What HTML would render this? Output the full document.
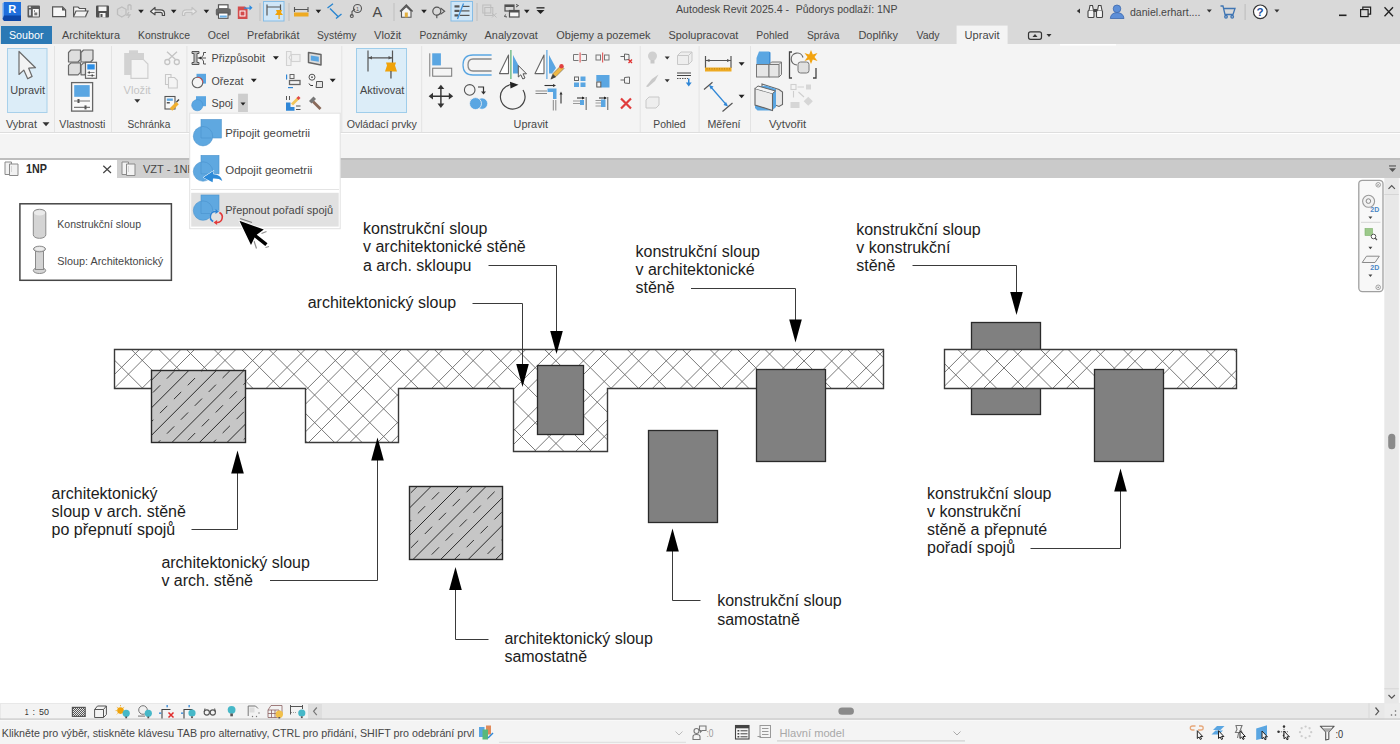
<!DOCTYPE html>
<html><head><meta charset="utf-8">
<style>
*{margin:0;padding:0;box-sizing:border-box}
html,body{width:1400px;height:744px;overflow:hidden;background:#fff;font-family:"Liberation Sans",sans-serif;color:#333}
.a{position:absolute}
.t{position:absolute;white-space:nowrap;font-size:11px;line-height:13px}
#title{left:0;top:0;width:1400px;height:23px;background:#d9d9d9}
#tabs{left:0;top:23px;width:1400px;height:21px;background:#d9d9d9}
#ribbon{left:0;top:44px;width:1400px;height:89px;background:#f4f4f4;border-bottom:1px solid #dedede}
#strip{left:0;top:134px;width:1400px;height:24px;background:#f4f4f4}
#vtabs{left:0;top:158px;width:1400px;height:20px;background:#cacaca;border-top:1px solid #bdbdbd}
#canvas{left:0;top:178px;width:1400px;height:525px;background:#fff}
#vbar{left:0;top:703px;width:1400px;height:17px;background:#e6e6e6}
#status{left:0;top:720px;width:1400px;height:24px;background:#f4f4f4;border-top:1px solid #d6d6d6}
.tab{top:28px;font-size:11.5px;color:#444}
.lbl{top:118px;font-size:11.5px;color:#444}
.sep{position:absolute;top:46px;width:1px;height:86px;background:#e2e2e2}
</style></head><body>
<div class="a" id="title"></div>
<div class="a" id="tabs"></div>
<div class="a" id="ribbon"></div>
<div class="a" id="strip"></div>
<div class="a" id="vtabs"></div>
<div class="a" id="canvas"></div>
<div class="a" id="vbar"></div>
<div class="a" id="status"></div>

<!-- DRAWING -->
<svg class="a" style="left:0;top:0" width="1400" height="744" viewBox="0 0 1400 744">
<defs>
<clipPath id="cw1"><polygon points="114.5,349.5 883.5,349.5 883.5,388.5 607.5,388.5 607.5,451.5 513.5,451.5 513.5,388.5 398.5,388.5 398.5,442.5 305.5,442.5 305.5,388.5 114.5,388.5"/></clipPath>
<clipPath id="cw2"><polygon points="944.5,349.5 1236.5,349.5 1236.5,388.5 944.5,388.5"/></clipPath>
<clipPath id="ca0"><rect x="151.5" y="370.5" width="94.0" height="72.0"/></clipPath>
<clipPath id="ca1"><rect x="409.5" y="486.5" width="93.0" height="73.0"/></clipPath>
</defs>
<polygon points="114.5,349.5 883.5,349.5 883.5,388.5 607.5,388.5 607.5,451.5 513.5,451.5 513.5,388.5 398.5,388.5 398.5,442.5 305.5,442.5 305.5,388.5 114.5,388.5" fill="#fff"/>
<path clip-path="url(#cw1)" d="M-10.9 345L99.1 455M16.7 345L126.7 455M44.2 345L154.2 455M71.8 345L181.8 455M99.3 345L209.3 455M126.9 345L236.9 455M154.4 345L264.4 455M182.0 345L292.0 455M209.6 345L319.6 455M237.1 345L347.1 455M264.6 345L374.6 455M292.2 345L402.2 455M319.8 345L429.8 455M347.3 345L457.3 455M374.9 345L484.9 455M402.4 345L512.4 455M429.9 345L540.0 455M457.5 345L567.5 455M485.1 345L595.0 455M512.6 345L622.6 455M540.1 345L650.1 455M567.7 345L677.7 455M595.2 345L705.2 455M622.8 345L732.8 455M650.4 345L760.4 455M677.9 345L787.9 455M705.5 345L815.5 455M733.0 345L843.0 455M760.5 345L870.5 455M788.1 345L898.1 455M815.6 345L925.6 455M843.2 345L953.2 455M870.8 345L980.8 455M898.3 345L1008.3 455M102.5 345L-7.5 455M143.9 345L33.9 455M185.3 345L75.3 455M226.7 345L116.7 455M268.1 345L158.1 455M309.5 345L199.5 455M350.9 345L240.9 455M392.3 345L282.3 455M433.7 345L323.7 455M475.1 345L365.1 455M516.5 345L406.5 455M557.9 345L447.9 455M599.3 345L489.3 455M640.7 345L530.7 455M682.1 345L572.1 455M723.5 345L613.5 455M764.9 345L654.9 455M806.3 345L696.3 455M847.7 345L737.7 455M889.1 345L779.1 455M930.5 345L820.5 455M971.9 345L861.9 455M1013.3 345L903.3 455M74.8 345L-35.2 455M116.2 345L6.2 455M157.6 345L47.6 455M199.0 345L89.0 455M240.4 345L130.4 455M281.8 345L171.8 455M323.2 345L213.2 455M364.6 345L254.6 455M406.0 345L296.0 455M447.4 345L337.4 455M488.8 345L378.8 455M530.2 345L420.2 455M571.6 345L461.6 455M613.0 345L503.0 455M654.4 345L544.4 455M695.8 345L585.8 455M737.2 345L627.2 455M778.6 345L668.6 455M820.0 345L710.0 455M861.4 345L751.4 455M902.8 345L792.8 455M944.2 345L834.2 455M985.6 345L875.6 455M1027.0 345L917.0 455" stroke="#6a6a6a" stroke-width="0.9" fill="none"/>
<polygon points="114.5,349.5 883.5,349.5 883.5,388.5 607.5,388.5 607.5,451.5 513.5,451.5 513.5,388.5 398.5,388.5 398.5,442.5 305.5,442.5 305.5,388.5 114.5,388.5" fill="none" stroke="#3a3a3a" stroke-width="1.4"/>
<rect x="971.5" y="322.5" width="69.0" height="92.0" fill="#808080" stroke="#2a2a2a" stroke-width="1.3"/>
<polygon points="944.5,349.5 1236.5,349.5 1236.5,388.5 944.5,388.5" fill="#fff"/>
<path clip-path="url(#cw2)" d="M870.8 345L917.8 392M898.3 345L945.3 392M925.9 345L972.9 392M953.4 345L1000.4 392M981.0 345L1028.0 392M1008.5 345L1055.5 392M1036.0 345L1083.0 392M1063.6 345L1110.6 392M1091.2 345L1138.2 392M1118.7 345L1165.7 392M1146.2 345L1193.2 392M1173.8 345L1220.8 392M1201.3 345L1248.3 392M1228.9 345L1275.9 392M1256.5 345L1303.5 392M930.5 345L883.5 392M971.9 345L924.9 392M1013.3 345L966.3 392M1054.7 345L1007.7 392M1096.1 345L1049.1 392M1137.5 345L1090.5 392M1178.9 345L1131.9 392M1220.3 345L1173.3 392M1261.7 345L1214.7 392M1303.1 345L1256.1 392M902.8 345L855.8 392M944.2 345L897.2 392M985.6 345L938.6 392M1027.0 345L980.0 392M1068.4 345L1021.4 392M1109.8 345L1062.8 392M1151.2 345L1104.2 392M1192.6 345L1145.6 392M1234.0 345L1187.0 392M1275.4 345L1228.4 392M1316.8 345L1269.8 392" stroke="#6a6a6a" stroke-width="0.9" fill="none"/>
<polygon points="944.5,349.5 1236.5,349.5 1236.5,388.5 944.5,388.5" fill="none" stroke="#3a3a3a" stroke-width="1.4"/>
<rect x="1094.5" y="369.5" width="69.0" height="92.0" fill="#808080" stroke="#2a2a2a" stroke-width="1.3"/>
<rect x="756.5" y="369.5" width="69.0" height="92.0" fill="#808080" stroke="#2a2a2a" stroke-width="1.3"/>
<rect x="537.5" y="365.5" width="46.0" height="69.0" fill="#808080" stroke="#2a2a2a" stroke-width="1.3"/>
<rect x="648.5" y="430.5" width="69.0" height="92.0" fill="#808080" stroke="#2a2a2a" stroke-width="1.3"/>
<rect x="151.5" y="370.5" width="94.0" height="72.0" fill="#c6c6c6"/>
<path clip-path="url(#ca0)" d="M108.1 368.5L32.1 444.5M135.7 368.5L59.7 444.5M163.2 368.5L87.2 444.5M190.8 368.5L114.8 444.5M218.3 368.5L142.3 444.5M245.9 368.5L169.9 444.5M273.4 368.5L197.4 444.5M301.0 368.5L225.0 444.5M328.5 368.5L252.5 444.5M356.1 368.5L280.1 444.5" stroke="#2a2a2a" stroke-width="1" fill="none"/>
<g clip-path="url(#ca0)" stroke="#333" stroke-width="1" stroke-dasharray="10.3 9.36" fill="none"><path d="M45.9 444.5L121.9 368.5" stroke-dashoffset="6.01"/><path d="M73.5 444.5L149.5 368.5" stroke-dashoffset="15.41"/><path d="M101.0 444.5L177.0 368.5" stroke-dashoffset="5.16"/><path d="M128.6 444.5L204.6 368.5" stroke-dashoffset="14.57"/><path d="M156.1 444.5L232.1 368.5" stroke-dashoffset="4.31"/><path d="M183.7 444.5L259.7 368.5" stroke-dashoffset="13.72"/><path d="M211.2 444.5L287.2 368.5" stroke-dashoffset="3.46"/><path d="M238.8 444.5L314.8 368.5" stroke-dashoffset="12.87"/><path d="M266.3 444.5L342.3 368.5" stroke-dashoffset="2.62"/><path d="M293.9 444.5L369.9 368.5" stroke-dashoffset="12.02"/></g>
<rect x="151.5" y="370.5" width="94.0" height="72.0" fill="none" stroke="#2a2a2a" stroke-width="1.4"/>
<rect x="409.5" y="486.5" width="93.0" height="73.0" fill="#c6c6c6"/>
<path clip-path="url(#ca1)" d="M377.8 484.5L300.8 561.5M405.4 484.5L328.4 561.5M433.0 484.5L356.0 561.5M460.5 484.5L383.5 561.5M488.0 484.5L411.0 561.5M515.6 484.5L438.6 561.5M543.2 484.5L466.2 561.5M570.7 484.5L493.7 561.5M598.2 484.5L521.2 561.5M625.8 484.5L548.8 561.5" stroke="#2a2a2a" stroke-width="1" fill="none"/>
<g clip-path="url(#ca1)" stroke="#333" stroke-width="1" stroke-dasharray="10.3 9.36" fill="none"><path d="M314.6 561.5L391.6 484.5" stroke-dashoffset="11.53"/><path d="M342.2 561.5L419.2 484.5" stroke-dashoffset="1.27"/><path d="M369.8 561.5L446.8 484.5" stroke-dashoffset="10.68"/><path d="M397.3 561.5L474.3 484.5" stroke-dashoffset="0.42"/><path d="M424.8 561.5L501.8 484.5" stroke-dashoffset="9.83"/><path d="M452.4 561.5L529.4 484.5" stroke-dashoffset="19.23"/><path d="M480.0 561.5L557.0 484.5" stroke-dashoffset="8.98"/><path d="M507.5 561.5L584.5 484.5" stroke-dashoffset="18.38"/><path d="M535.0 561.5L612.0 484.5" stroke-dashoffset="8.13"/><path d="M562.6 561.5L639.6 484.5" stroke-dashoffset="17.54"/></g>
<rect x="409.5" y="486.5" width="93.0" height="73.0" fill="none" stroke="#2a2a2a" stroke-width="1.4"/>
<path d="M488.5 265.5H556.5V340" stroke="#3a3a3a" stroke-width="1" fill="none"/>
<polygon points="550.2,331 562.8,331 556.5,354" fill="#000" stroke="#fff" stroke-width="0"/>
<path d="M472.5 303.5H522.5V370" stroke="#3a3a3a" stroke-width="1" fill="none"/>
<polygon points="516.2,364 528.8,364 522.5,387" fill="#000" stroke="#fff" stroke-width="0"/>
<path d="M691 288.5H795.5V325" stroke="#3a3a3a" stroke-width="1" fill="none"/>
<polygon points="789.2,319.5 801.8,319.5 795.5,342.5" fill="#000" stroke="#fff" stroke-width="0"/>
<path d="M912.5 265.5H1016.5V300" stroke="#3a3a3a" stroke-width="1" fill="none"/>
<polygon points="1010.2,292 1022.8,292 1016.5,315" fill="#000" stroke="#fff" stroke-width="0"/>
<path d="M191.5 529.5H237.5V465" stroke="#3a3a3a" stroke-width="1" fill="none"/>
<polygon points="231.2,473.5 243.8,473.5 237.5,450.5" fill="#000"/>
<path d="M270 580.5H377.5V455" stroke="#3a3a3a" stroke-width="1" fill="none"/>
<polygon points="371.2,460.5 383.8,460.5 377.5,437.5" fill="#000"/>
<path d="M488.5 639.5H455.5V580" stroke="#3a3a3a" stroke-width="1" fill="none"/>
<polygon points="449.2,590 461.8,590 455.5,567" fill="#000"/>
<path d="M700.5 600.5H672.5V540" stroke="#3a3a3a" stroke-width="1" fill="none"/>
<polygon points="666.2,551.5 678.8,551.5 672.5,528.5" fill="#000"/>
<path d="M1030.5 548.5H1120.5V480" stroke="#3a3a3a" stroke-width="1" fill="none"/>
<polygon points="1114.2,491.5 1126.8,491.5 1120.5,468.5" fill="#000"/>
<g font-family="Liberation Sans" font-size="16" fill="#1c1c1c">
<text x="363" y="234.2">konstrukční sloup</text>
<text x="363" y="252.4">v architektonické stěně</text>
<text x="363" y="270.6">a arch. skloupu</text>
<text x="307.7" y="307.8">architektonický sloup</text>
<text x="635.5" y="256.7">konstrukční sloup</text>
<text x="635.5" y="274.9">v architektonické</text>
<text x="635.5" y="293.1">stěně</text>
<text x="856.2" y="235.0">konstrukční sloup</text>
<text x="856.2" y="253.2">v konstrukční</text>
<text x="856.2" y="271.4">stěně</text>
<text x="51.6" y="498.6">architektonický</text>
<text x="51.6" y="516.8">sloup v arch. stěně</text>
<text x="51.6" y="535.0">po přepnutí spojů</text>
<text x="161.4" y="568.0">architektonický sloup</text>
<text x="161.4" y="586.2">v arch. stěně</text>
<text x="504.4" y="644.0">architektonický sloup</text>
<text x="504.4" y="662.2">samostatně</text>
<text x="717.2" y="606.4">konstrukční sloup</text>
<text x="717.2" y="624.6">samostatně</text>
<text x="927" y="498.8">konstrukční sloup</text>
<text x="927" y="517.0">v konstrukční</text>
<text x="927" y="535.1">stěně a přepnuté</text>
<text x="927" y="553.4">pořadí spojů</text>
</g>
</svg>

<svg class="a" style="left:0;top:0" width="1400" height="744" viewBox="0 0 1400 744">
<rect x="4" y="2" width="17" height="15" fill="#1f6fdc"/>
<polygon points="2.5,3.5 4,2 4,17 2.5,19" fill="#6aa6ef"/>
<rect x="4" y="15.5" width="17" height="5.5" fill="#0c47a8"/>
<polygon points="2.5,19 4,15.5 4,21" fill="#0c47a8"/>
<text x="8.2" y="13.2" font-family="Liberation Sans" font-weight="bold" font-size="11" fill="#fff">R</text>
<rect x="27.5" y="5.5" width="12.5" height="12" rx="1" fill="#5a5a5a"/><rect x="32.8" y="9" width="6" height="7.5" fill="#f8f8f8"/><rect x="29" y="9.5" width="2" height="6" fill="#cfd3da"/><rect x="28.8" y="6.5" width="2" height="1.5" fill="#e6e6e6"/><rect x="34.3" y="12.5" width="3" height="2.8" fill="#777"/><rect x="34" y="10.3" width="0.9" height="1.5" fill="#555"/>
<path d="M52.6 6.8H62.5L65.6 9.9V16.6H52.6Z" fill="#f7f7f7" stroke="#555" stroke-width="1.2"/><path d="M62 6.8V10.4H65.6" fill="#555"/>
<path d="M73.6 7H78L79.5 8.5H85.5V16.6H73.6Z" fill="#f7f7f7" stroke="#555" stroke-width="1.2"/><path d="M73.6 16.6L76 11H88L85.5 16.6" fill="#f2f2f2" stroke="#555" stroke-width="1.2"/>
<rect x="96" y="5.5" width="13" height="12" rx="1" fill="#505050"/><rect x="98.5" y="6.5" width="8" height="4.5" fill="#f4f4f4"/><rect x="99.5" y="13" width="6" height="4.5" fill="#f4f4f4"/><rect x="100.5" y="14" width="2" height="3" fill="#505050"/>
<g fill="none" stroke="#bdbdbd" stroke-width="1.3"><path d="M117.5 9.3L121.8 7L126 9.3V14.5L121.8 17L117.5 14.5Z"/><path d="M128 10.5V5.5Q129.5 4 131 5.5V10"/><path d="M129 12L127 15H130L128 18"/></g><path d="M119.5 10.5H124M121.8 10.5V15" stroke="#d6d6d6" stroke-width="1"/>
<polygon points="138.2,9.85 143.8,9.85 141,13.15" fill="#222"/>
<path d="M150.5 11.5L155 7.5V9.8H160.5Q164.5 9.8 164.5 13.3V15.5H162.3V13.8Q162.3 12.3 160.5 12.3H155V14.8Z" fill="#f2f2f2" stroke="#4a4a4a" stroke-width="1.2" stroke-linejoin="round"/>
<polygon points="170.89999999999998,9.85 176.5,9.85 173.7,13.15" fill="#222"/>
<path d="M196.5 11.5L192 7.5V9.8H186.5Q182.5 9.8 182.5 13.3V15.5H184.7V13.8Q184.7 12.3 186.5 12.3H192V14.8Z" fill="#e8e8e8" stroke="#c2c2c2" stroke-width="1.2" stroke-linejoin="round"/>
<polygon points="203.6,9.85 209.20000000000002,9.85 206.4,13.15" fill="#222"/>
<rect x="218.5" y="4.8" width="9.5" height="4" fill="#fff" stroke="#555" stroke-width="1.2"/><rect x="215.8" y="8.5" width="15" height="7" rx="1.5" fill="#666"/><rect x="218.5" y="13" width="9.5" height="5.3" fill="#fff" stroke="#555" stroke-width="1.1"/><rect x="219.8" y="15.5" width="7" height="2" fill="#6ab0e8"/>
<path d="M237.8 6.5H245L247.5 9V19H237.8Z" fill="#d34b4b"/><rect x="240" y="11" width="5" height="5" fill="none" stroke="#fff" stroke-width="1"/><path d="M244 7.5H249.5V5L252.5 7.8L249.5 10.6V8.8H244Z" fill="#2a8ae0"/>
<rect x="259.5" y="3" width="1" height="18" fill="#c0c0c0"/>
<rect x="263.5" y="1.5" width="20.5" height="19.5" fill="#cfe6f7" stroke="#86bde6" stroke-width="1"/>
<g stroke="#555" stroke-width="1.2" fill="none"><path d="M267 4.5V15.5M280.5 4.5V11M267 7H280.5"/></g><path d="M276 10H282L281 12.5L283 15H275L277 12.5Z" fill="#f0a30a"/><rect x="278.5" y="15" width="1.2" height="4" fill="#f0a30a"/>
<rect x="288.5" y="3" width="1" height="18" fill="#c0c0c0"/>
<g stroke="#555" stroke-width="1.1" fill="none"><path d="M294.5 7V12M308 7V12M294.5 9.5H308"/></g><rect x="294" y="12.5" width="14.5" height="4" fill="#eeaa22"/>
<polygon points="315.59999999999997,9.85 321.2,9.85 318.4,13.15" fill="#222"/>
<g stroke="#2b86d0" stroke-width="1.4" fill="none"><path d="M330 8.5L338.5 17"/><path d="M327.5 8L333 3.8M336 18.5L341.5 14"/></g>
<g stroke="#555" stroke-width="1.1" fill="none"><path d="M352 16V11.5L355 9"/><circle cx="357.5" cy="8.5" r="4"/><circle cx="351.8" cy="16" r="1.5"/></g><text x="356" y="10.5" font-size="5.5" font-family="Liberation Sans" fill="#555">1</text>
<text x="372.5" y="17.3" font-size="14.5" font-family="Liberation Sans" fill="#4a4a4a">A</text>
<rect x="393.5" y="3" width="1" height="18" fill="#c0c0c0"/>
<path d="M400 11.5L406.3 5L412.6 11.5" fill="none" stroke="#555" stroke-width="1.4"/><path d="M401.5 11V17.3H411V11L406.3 6.5Z" fill="#f4f4f4" stroke="#555" stroke-width="1.1"/><rect x="404.8" y="12.5" width="3" height="4.8" fill="#e3b040"/>
<polygon points="421.2,9.85 426.8,9.85 424,13.15" fill="#222"/>
<circle cx="436.8" cy="11.2" r="4" fill="none" stroke="#555" stroke-width="1.2"/><path d="M440.5 8L444.6 11.2L440.5 14.4" fill="none" stroke="#555" stroke-width="1.2"/><rect x="436.2" y="15" width="1.2" height="3.2" fill="#555"/>
<rect x="451" y="1.5" width="21.5" height="19.5" fill="#cfe6f7" stroke="#86bde6" stroke-width="1"/>
<g fill="#555"><rect x="454.5" y="5.3" width="5" height="2.2"/><rect x="454.5" y="9.8" width="5" height="2.2"/><rect x="454.5" y="14.3" width="4" height="2.2"/><rect x="462" y="5.8" width="7.5" height="1.2"/><rect x="461" y="10.3" width="8.5" height="1.2"/><rect x="460" y="14.8" width="9.5" height="1.2"/></g><path d="M463.5 3.5L457.5 19" stroke="#3e8fd6" stroke-width="1.3"/>
<rect x="476.5" y="3" width="1" height="18" fill="#c0c0c0"/>
<g fill="none" stroke="#bdbdbd" stroke-width="1"><rect x="482.8" y="5" width="8" height="8"/><rect x="484.8" y="7.5" width="8" height="8"/><path d="M492 13L496.5 17.5M496.5 13L492 17.5"/></g>
<g fill="none" stroke="#505050" stroke-width="1.2"><rect x="505" y="5" width="9" height="6"/><rect x="509.5" y="10.5" width="9.5" height="6.5" fill="#f8f8f8"/></g><rect x="505" y="5" width="9" height="2" fill="#505050"/><rect x="509.5" y="10.5" width="9.5" height="2" fill="#505050"/><path d="M516 4.5L518.5 5.5L516 7M505.5 14.5L504.5 16.5L507 17" stroke="#505050" stroke-width="1" fill="none"/>
<polygon points="524.0,9.85 529.5999999999999,9.85 526.8,13.15" fill="#222"/>
<rect x="536.5" y="7.2" width="8" height="1.3" fill="#222"/><polygon points="536.5,10 544.5,10 540.5,14" fill="#222"/>
<polygon points="1080,8.5 1080,13.5 1076.8,11" fill="#333"/>
<g fill="#f4f4f4" stroke="#444" stroke-width="1.1"><rect x="1088" y="10.5" width="6" height="7" rx="1"/><rect x="1096.5" y="10.5" width="6" height="7" rx="1"/><path d="M1089 10.5L1090 5.5H1092.5L1093.5 10.5M1097.5 10.5L1098.5 5.5H1101L1102 10.5"/></g><rect x="1093.5" y="9" width="3.5" height="3" fill="#444"/>
<circle cx="1117" cy="8.8" r="3.8" fill="#5d8fd8" stroke="#3c68ad" stroke-width="0.8"/><path d="M1110.3 18.5Q1110.8 12.8 1117 12.6Q1123.4 12.8 1124 18.5Z" fill="#5d8fd8" stroke="#3c68ad" stroke-width="0.8"/>
<polygon points="1206.8,9.5 1211.8,9.5 1209.3,12.5" fill="#333"/>
<g fill="none" stroke="#3f75b3" stroke-width="1.3"><path d="M1220.5 6H1223L1225 14.5H1233L1235 8.5H1224"/><circle cx="1226" cy="16.8" r="1.3"/><circle cx="1232.2" cy="16.8" r="1.3"/></g>
<rect x="1244.6" y="4" width="1" height="16" fill="#bbb"/>
<circle cx="1260.3" cy="11.8" r="6.8" fill="#fff" stroke="#333" stroke-width="1.2"/><text x="1256.6" y="16.3" font-size="11.5" font-weight="bold" font-family="Liberation Sans" fill="#2250a0">?</text>
<polygon points="1274.4,9.5 1279.4,9.5 1276.9,12.5" fill="#333"/>
<rect x="1339" y="14.5" width="7.5" height="1.6" fill="#222"/>
<g fill="none" stroke="#222" stroke-width="1.2"><rect x="1360.6" y="9.6" width="7.5" height="7"/><path d="M1362.8 9.6V7.2H1370.6V14.2H1368.1"/></g>
<path d="M1384.5 7.2L1393 16.2M1393 7.2L1384.5 16.2" stroke="#222" stroke-width="1.3"/>
<rect x="1028.5" y="31.8" width="13" height="7.5" rx="2" fill="none" stroke="#333" stroke-width="1.2"/><polygon points="1032.5,37 1037.5,37 1035,34" fill="#333"/>
<polygon points="1046.5,34.0 1051.5,34.0 1049,37.0" fill="#333"/><rect x="54" y="46" width="1" height="86" fill="#e3e3e3"/>
<rect x="111" y="46" width="1" height="86" fill="#e3e3e3"/>
<rect x="186.4" y="46" width="1" height="86" fill="#e3e3e3"/>
<rect x="341.3" y="46" width="1" height="86" fill="#e3e3e3"/>
<rect x="421.2" y="46" width="1" height="86" fill="#e3e3e3"/>
<rect x="639.7" y="46" width="1" height="86" fill="#e3e3e3"/>
<rect x="698.6" y="46" width="1" height="86" fill="#e3e3e3"/>
<rect x="750" y="46" width="1" height="86" fill="#e3e3e3"/>
<rect x="7.5" y="48.5" width="39.5" height="64" fill="#dcedf8" stroke="#a8d0ea" stroke-width="1"/>
<path d="M19 51.5V74.5L23.8 70.1L27.7 78.8L32.1 76.4L28.7 68.2L35.5 67.7Z" fill="#f3f3f3" stroke="#6a6a6a" stroke-width="1.2" stroke-linejoin="round"/>
<polygon points="42.5,122.3 49.5,122.3 46,126.3" fill="#333"/>
<g fill="#dedede" stroke="#6a6a6a" stroke-width="1.2" stroke-linejoin="round"><path d="M71.0 50H80.5V59.5L78.0 62H68.5V52.5Z"/><path d="M83.5 50H93V59.5L90.5 62H81V52.5Z"/><path d="M71.0 62.8H80.5V72.3L78.0 74.8H68.5V65.3Z"/><path d="M83.5 62.8H87V72.3L84.5 74.8H81V65.3Z"/></g>
<rect x="85.5" y="62.3" width="11" height="16" fill="#f7f7f7" stroke="#666" stroke-width="1.2"/><rect x="87.3" y="64.3" width="7.4" height="5.2" fill="#2c8ee6"/><path d="M87.5 72.5H94.5M87.5 75.5H94.5" stroke="#777" stroke-width="0.9"/><rect x="88.5" y="71.5" width="1.5" height="2" fill="#444"/><rect x="91.5" y="74.5" width="1.5" height="2" fill="#444"/>
<rect x="71.6" y="82.6" width="21" height="28.5" fill="#f9f9f9" stroke="#666" stroke-width="1.3"/><rect x="74.2" y="85.1" width="15.5" height="11.7" fill="#5aa6e2"/>
<path d="M74 101H90M74 107.4H90" stroke="#777" stroke-width="1.1"/><rect x="77.5" y="99" width="2" height="4" fill="#555"/><rect x="84.5" y="105.4" width="2" height="4" fill="#555"/>
<rect x="124.2" y="53" width="19.8" height="22" fill="#d2d2d2"/><rect x="129" y="50.3" width="9" height="3" fill="#d2d2d2"/>
<path d="M131 59.5H143.5L147.9 64V78.3H131Z" fill="#f4f4f4" stroke="#cfcfcf" stroke-width="1.2"/>
<polygon points="134.3,99.25 140.3,99.25 137.3,102.75" fill="#333"/>
<g fill="none" stroke="#c4c4c4" stroke-width="1.3"><circle cx="167.3" cy="62" r="2.5"/><circle cx="176.8" cy="62" r="2.5"/><path d="M168.5 59.5L177 51.7M175.5 59.5L167 51.7"/></g>
<g fill="#f4f4f4" stroke="#c8c8c8" stroke-width="1.1"><path d="M165.5 74.5H171V84.5H165.5Z"/><path d="M168.5 77.5H174.5L177.3 80.3V88H168.5Z"/></g>
<rect x="165" y="96.5" width="10" height="12.5" fill="#f8f8f8" stroke="#555" stroke-width="1.1"/><rect x="166.8" y="98.5" width="6" height="2.3" fill="#5aa6e2"/><rect x="166.8" y="102" width="3" height="1.5" fill="#555"/><path d="M171 109.5L177.5 103" stroke="#f0b030" stroke-width="3.5"/><path d="M176.5 102L179 99.5" stroke="#444" stroke-width="1.5"/>
<path d="M192 51.5H199V53.5H197V62.5H199V64.5H192V62.5H194V53.5H192Z" fill="#bdbdbd" stroke="#555" stroke-width="1"/>
<g fill="none" stroke="#555" stroke-width="1"><path d="M197.5 58H206M201 58L203.5 55V52.5H206M201 58L203.5 61V64H206"/></g><polygon points="198.5,58 201,56.5 201,59.5" fill="#333"/>
<rect x="196.5" y="73.8" width="9.5" height="9.8" fill="#5aa6e2"/><circle cx="197.5" cy="82.5" r="5.3" fill="#f4f4f4" stroke="#666" stroke-width="1.1"/><path d="M197.5 77.2A5.3 5.3 0 0 1 202.8 82.5" fill="none" stroke="#e05050" stroke-width="1"/>
<rect x="196" y="96.2" width="10" height="10" fill="#5aa6e2"/><circle cx="197.3" cy="105.2" r="5.6" fill="#5aa6e2" stroke="#4a94d0" stroke-width="0.6"/>
<polygon points="272.9,56.25 278.9,56.25 275.9,59.75" fill="#222"/>
<polygon points="250.8,78.85 256.8,78.85 253.8,82.35" fill="#222"/>
<rect x="238.1" y="93.7" width="9.8" height="18.3" fill="#cdcdcd"/>
<polygon points="240.5,102.5 245.5,102.5 243,105.5" fill="#222"/>
<g fill="#f0f0f0" stroke="#d2d2d2" stroke-width="1.1"><path d="M286.5 51.5H291V54.5L289 57.5L291 60.5V65.5H286.5Z"/><rect x="291.5" y="54.5" width="8.5" height="7"/></g>
<path d="M308.5 52.5L321 54.5V65L308.5 62.5Z" fill="#dcdcdc" stroke="#666" stroke-width="1.5" stroke-linejoin="round"/><path d="M310.8 55.5L318.8 56.8V61.8L310.8 60.5Z" fill="#5aa6e2"/>
<rect x="286" y="74.5" width="1.2" height="5" fill="#2f86d6"/><rect x="290" y="74.5" width="4" height="4" fill="none" stroke="#666" stroke-width="1"/><rect x="289.5" y="80.5" width="10.5" height="4" fill="none" stroke="#666" stroke-width="1.3"/><rect x="288" y="87" width="5" height="1.2" fill="#2f86d6"/>
<circle cx="312" cy="77.2" r="3" fill="none" stroke="#555" stroke-width="1"/><circle cx="312" cy="77.2" r="0.9" fill="#555"/><path d="M316.5 81.5H322.5V87.5H316L316.5 84Z" fill="#e6e6e6" stroke="#555" stroke-width="1"/><path d="M309 83.5L310.5 85.5H313" stroke="#333" stroke-width="1" fill="none"/>
<polygon points="329.7,78.85 335.7,78.85 332.7,82.35" fill="#222"/>
<rect x="286" y="96" width="1" height="4" fill="#555"/><rect x="289" y="96" width="1" height="4" fill="#555"/><path d="M286 102.5H290.5V107H294.5V110.7H286Z" fill="#2f86d6"/><path d="M296 106H300.5M296 109.5H300.5" stroke="#555" stroke-width="1"/><path d="M292 104.5L298.5 98" stroke="#f2c55a" stroke-width="2.8"/><path d="M297.5 99L299.5 97" stroke="#e04848" stroke-width="2.8"/>
<path d="M313 101.5L320.5 109" stroke="#8a6a5a" stroke-width="2.8"/><path d="M309 101L313.5 96.5L316 99L311.5 103.5Z" fill="#777"/><rect x="356.5" y="48.5" width="50" height="64" fill="#dcedf8" stroke="#9fcdea" stroke-width="1"/>
<g stroke="#555" stroke-width="1.2" fill="none"><path d="M368 50.5V71.5M392.5 50.5V63M368 57.8H392.5"/></g><polygon points="368.5,57.8 372,56 372,59.6" fill="#555"/><polygon points="392,57.8 388.5,56 388.5,59.6" fill="#555"/>
<path d="M386 62.5H396L395 65.5L397 71.5H385L387 65.5Z" fill="#f0a30a"/><rect x="390.3" y="71" width="1.3" height="7.5" fill="#555"/>
<rect x="429.2" y="53.3" width="1.1" height="23.3" fill="#888"/><rect x="432.2" y="53.3" width="8.7" height="12.1" fill="#5aa6e2"/><rect x="432.7" y="68.2" width="19" height="8" fill="#f5f5f5" stroke="#777" stroke-width="1"/>
<path d="M491.6 55H473Q463 55 463 65Q463 75 473 75H491.6" fill="none" stroke="#5aa6e2" stroke-width="1.3"/><path d="M491.6 59H473Q468 59 468 65Q468 71 473 71H491.6" fill="none" stroke="#888" stroke-width="1.3"/>
<g fill="#333"><polygon points="440.9,84.8 437.5,89 444.3,89"/><polygon points="440.9,108 437.5,103.5 444.3,103.5"/><polygon points="428.6,96.2 433,92.8 433,99.6"/><polygon points="453.2,96.2 448.8,92.8 448.8,99.6"/></g><path d="M440.9 88V104.5M432 96.2H450" stroke="#333" stroke-width="1.4"/>
<circle cx="469.7" cy="89.9" r="5.3" fill="none" stroke="#555" stroke-width="1.1"/><path d="M478 87H483.5V92" fill="none" stroke="#333" stroke-width="1.2"/><polygon points="481,91.5 486,91.5 483.5,94.5" fill="#333"/>
<circle cx="482" cy="103.6" r="5.6" fill="#5aa6e2" stroke="#fff" stroke-width="0.5"/><circle cx="475.5" cy="103.6" r="6" fill="#5aa6e2" stroke="#f4f4f4" stroke-width="0.8"/>
<path d="M499.5 73.6L508.5 55V73.6Z" fill="#fff" stroke="#666" stroke-width="1.1" stroke-linejoin="round"/><rect x="510.3" y="50" width="1.2" height="29" fill="#56b070"/><path d="M513 55L520.5 69V73.6H513Z" fill="#5aa6e2"/>
<path d="M518.3 65.5V77L520.8 74.8L522.8 79L525 78L523 73.8H526.5Z" fill="#f4f4f4" stroke="#555" stroke-width="1" stroke-linejoin="round"/>
<path d="M535 73.6L544 55V73.6Z" fill="#fff" stroke="#666" stroke-width="1.1" stroke-linejoin="round"/><rect x="546.3" y="50" width="1.2" height="29" fill="#5aa6e2"/><path d="M549 55L556 68L552 73.6H549Z" fill="#5aa6e2"/>
<path d="M551 79L553 73.5L561 65.5L564 68.5L556 76.5Z" fill="#f0b845" stroke="#555" stroke-width="0.5"/><circle cx="561.5" cy="66.3" r="2.2" fill="#e04040"/><polygon points="550.5,79.5 553,74 556,77" fill="#444"/>
<path d="M512 84.5A12.3 12.3 0 1 0 523 90" fill="none" stroke="#444" stroke-width="1.2"/><polygon points="510,81.7 518.5,84.8 510.5,88.5" fill="#222"/>
<path d="M535.5 91H547M535.5 93.5H547" stroke="#888" stroke-width="1"/><path d="M547.5 88.5H556.5V99H553V92H547.5Z" fill="#5aa6e2"/><path d="M553.3 100V110.5M555.8 100V110.5" stroke="#888" stroke-width="1"/>
<path d="M544.5 85.5H555" stroke="#333" stroke-width="1.1"/><polygon points="556,85.5 553,84 553,87" fill="#333"/><path d="M561 103.5V93" stroke="#333" stroke-width="1.1"/><polygon points="561,91.5 559.5,94.5 562.5,94.5" fill="#333"/>
<g fill="none" stroke="#777" stroke-width="1"><path d="M578.5 54.5H573.5V60.5H578.5M581.5 54.5H586.5V60.5H581.5"/><rect x="596" y="55" width="4.5" height="5"/><rect x="604.5" y="55" width="4.5" height="5"/></g><rect x="579.5" y="52.5" width="1.2" height="10" fill="#e06060"/><rect x="602" y="52.5" width="1.2" height="10" fill="#e06060"/>
<g fill="none" stroke="#666" stroke-width="1"><path d="M620.5 56.5H624M624.5 54L629 54.5V59.5L624.5 60Z"/></g><path d="M628.5 59.5L632 63M632 59.5L628.5 63" stroke="#e03030" stroke-width="1.3"/>
<g fill="#5aa6e2"><rect x="580.5" y="76.5" width="5" height="4.5"/><rect x="574" y="82.5" width="5" height="4.5"/><rect x="580.5" y="82.5" width="5" height="4.5"/></g><rect x="574.5" y="77" width="4" height="3.5" fill="none" stroke="#666" stroke-width="1"/>
<path d="M596.3 75H609.5V87.5H601V81.5H596.3Z" fill="#5aa6e2"/><rect x="596.8" y="82" width="4" height="5" fill="#f4f4f4" stroke="#555" stroke-width="1"/>
<g fill="none" stroke="#666" stroke-width="1"><path d="M620.5 80H624M624.5 77.5L629.5 77V83.5L624.5 83Z"/></g>
<path d="M573 101H580M573 103.5H580" stroke="#999" stroke-width="1.1"/><rect x="580" y="100" width="4" height="5" fill="#5aa6e2"/><rect x="585.5" y="97" width="1.4" height="13" fill="#888"/><path d="M577 98H584" stroke="#222" stroke-width="1"/><polygon points="585,98 582,96.5 582,99.5" fill="#222"/>
<path d="M595.5 100.5H601M595.5 103H601M595.5 106H601" stroke="#999" stroke-width="1.1"/><rect x="601" y="99.5" width="4.5" height="7.5" fill="#5aa6e2"/><rect x="607" y="97" width="1.4" height="13" fill="#888"/><path d="M599 98H606" stroke="#222" stroke-width="1"/><polygon points="607,98 604,96.5 604,99.5" fill="#222"/>
<path d="M621 98.5L631 108.5M631 98.5L621 108.5" stroke="#e03c3c" stroke-width="2.2"/>
<circle cx="652.5" cy="56" r="4.5" fill="#d0d0d0"/><rect x="650.5" y="60" width="4" height="3.5" fill="#c8c8c8"/>
<polygon points="664.7,56.4 669.7,56.4 667.2,59.4" fill="#333"/>
<g fill="#eee" stroke="#c8c8c8" stroke-width="1"><path d="M677.5 55.5L681 52H692V61L688.5 64.5H677.5Z"/><path d="M677.5 55.5H688.5V64.5M688.5 55.5L692 52"/></g>
<path d="M646 86.5L652 79L658.5 74.5L655 81L648 87Z" fill="#c9c9c9"/>
<polygon points="664.7,79.2 669.7,79.2 667.2,82.2" fill="#333"/>
<path d="M677 73H691M677 75.5H691" stroke="#444" stroke-width="1.1"/><path d="M677 78.5H688" stroke="#444" stroke-width="0.9" stroke-dasharray="1.5 1"/><rect x="688" y="78.5" width="1.5" height="5" fill="#2f86d6"/><polygon points="685.8,82.5 691.7,82.5 688.75,86.5" fill="#2f86d6"/>
<g fill="#eee" stroke="#c8c8c8" stroke-width="1"><path d="M646 100L649 97H659V105L656 108H646Z"/></g>
<g stroke="#555" stroke-width="1.2" fill="none"><path d="M705.5 56V68M731 56V68M705.5 60.5H731"/></g><polygon points="706,60.5 709.5,59 709.5,62" fill="#555"/><polygon points="730.5,60.5 727,59 727,62" fill="#555"/><rect x="705" y="67.5" width="26.5" height="4" fill="#eeaa22"/><path d="M707 68V69.5M709.5 68V69.5M712 68V69.5M714.5 68V69.5M717 68V69.5M719.5 68V69.5M722 68V69.5M724.5 68V69.5M727 68V69.5M729.5 68V69.5" stroke="#b07a10" stroke-width="0.6"/>
<polygon points="738.6,62.25 744.6,62.25 741.6,65.75" fill="#222"/>
<path d="M704 89.5L712.5 82.3M722.5 111.5L732.5 103" stroke="#555" stroke-width="1.2"/><path d="M710 86L727 105.5" stroke="#2f86d6" stroke-width="1.2"/><polygon points="709,85 713.5,86.5 710.8,89.5" fill="#2f86d6"/><polygon points="728,106.5 723.5,105 726,102" fill="#2f86d6"/>
<polygon points="738.6,94.65 744.6,94.65 741.6,98.15" fill="#222"/>
<path d="M756.5 58L759 51.5H769L769 64.5H756.5Z" fill="#5aa6e2"/><path d="M769 51.5L770.5 52.5V64.5H769Z" fill="#3d8ed6"/>
<g fill="#e6e6e6" stroke="#777" stroke-width="1"><rect x="756.5" y="64.5" width="12.5" height="12.5"/><path d="M769 64.5L771.5 62H781.5V74.5L779 77H769Z"/></g><path d="M769 64.5H779V77M779 64.5L781.5 62" fill="none" stroke="#777" stroke-width="1"/>
<path d="M792 52H789.5V78H792M816 68V78H813" fill="none" stroke="#444" stroke-width="1.3"/><path d="M803 57.5A6 6 0 1 0 797 65" fill="none" stroke="#666" stroke-width="1.2"/><rect x="798" y="62" width="11" height="11" rx="2.5" fill="#e0e0e0" stroke="#777" stroke-width="1"/>
<g transform="translate(811 57)"><polygon points="0,-7 1.8,-2.5 6.5,-4 3.5,0 6.5,4 1.8,2.5 0,7 -1.8,2.5 -6.5,4 -3.5,0 -6.5,-4 -1.8,-2.5" fill="#f2a30f"/></g>
<g fill="#e8e8e8" stroke="#666" stroke-width="1.1"><path d="M762 84L779 89.5L782.5 92V104.5L779 106.5L762 100Z"/></g><path d="M760 86.5L765.5 85.5L776 89V107L772 110.5H757.5L755 108V88.5Z" fill="#5aa6e2"/><path d="M755 88.5L772.5 93.5V110.5L755 105Z" fill="#ececec" stroke="#666" stroke-width="1.1"/><path d="M755 88.5L758 86L775.5 91L772.5 93.5" fill="#f4f4f4" stroke="#666" stroke-width="1"/>
<g fill="none" stroke="#cfcfcf" stroke-width="1.1"><rect x="791" y="84.5" width="5" height="5"/><path d="M797.5 87H804M793.5 91V97.5M798.5 92L804 97"/></g><rect x="806" y="84.5" width="5" height="5" fill="#d6d6d6"/><rect x="790.5" y="102" width="9" height="6" fill="#d6d6d6"/><rect x="805" y="98" width="6.5" height="6.5" transform="rotate(45 808.25 101.25)" fill="#d6d6d6"/><g font-family="Liberation Sans">
<text x="676.0" y="13.4" font-size="11.3" fill="#464646" font-weight="normal" textLength="113.0" lengthAdjust="spacingAndGlyphs">Autodesk Revit 2025.4 -</text>
<text x="795.7" y="13.4" font-size="11.3" fill="#464646" font-weight="normal" textLength="101.8" lengthAdjust="spacingAndGlyphs">Půdorys podlaží: 1NP</text>
<text x="1130.0" y="16.0" font-size="11.8" fill="#464646" font-weight="normal" textLength="70.4" lengthAdjust="spacingAndGlyphs">daniel.erhart....</text>
<rect x="1" y="26" width="51" height="18" fill="#2b79b5"/>
<rect x="956.6" y="25.6" width="51" height="18.4" fill="#f4f4f4"/>
<text x="8.9" y="38.6" font-size="11.7" fill="#fff" font-weight="normal" textLength="34.6" lengthAdjust="spacingAndGlyphs">Soubor</text>
<text x="62.0" y="38.6" font-size="11.7" fill="#464646" font-weight="normal" textLength="58.0" lengthAdjust="spacingAndGlyphs">Architektura</text>
<text x="138.0" y="38.6" font-size="11.7" fill="#464646" font-weight="normal" textLength="52.0" lengthAdjust="spacingAndGlyphs">Konstrukce</text>
<text x="207.7" y="38.6" font-size="11.7" fill="#464646" font-weight="normal" textLength="21.7" lengthAdjust="spacingAndGlyphs">Ocel</text>
<text x="247.1" y="38.6" font-size="11.7" fill="#464646" font-weight="normal" textLength="52.3" lengthAdjust="spacingAndGlyphs">Prefabrikát</text>
<text x="317.0" y="38.6" font-size="11.7" fill="#464646" font-weight="normal" textLength="39.4" lengthAdjust="spacingAndGlyphs">Systémy</text>
<text x="374.0" y="38.6" font-size="11.7" fill="#464646" font-weight="normal" textLength="27.2" lengthAdjust="spacingAndGlyphs">Vložit</text>
<text x="419.4" y="38.6" font-size="11.7" fill="#464646" font-weight="normal" textLength="47.8" lengthAdjust="spacingAndGlyphs">Poznámky</text>
<text x="484.6" y="38.6" font-size="11.7" fill="#464646" font-weight="normal" textLength="53.2" lengthAdjust="spacingAndGlyphs">Analyzovat</text>
<text x="556.3" y="38.6" font-size="11.7" fill="#464646" font-weight="normal" textLength="94.2" lengthAdjust="spacingAndGlyphs">Objemy a pozemek</text>
<text x="668.5" y="38.6" font-size="11.7" fill="#464646" font-weight="normal" textLength="69.8" lengthAdjust="spacingAndGlyphs">Spolupracovat</text>
<text x="756.3" y="38.6" font-size="11.7" fill="#464646" font-weight="normal" textLength="32.2" lengthAdjust="spacingAndGlyphs">Pohled</text>
<text x="807.0" y="38.6" font-size="11.7" fill="#464646" font-weight="normal" textLength="32.6" lengthAdjust="spacingAndGlyphs">Správa</text>
<text x="858.4" y="38.6" font-size="11.7" fill="#464646" font-weight="normal" textLength="39.6" lengthAdjust="spacingAndGlyphs">Doplňky</text>
<text x="916.4" y="38.6" font-size="11.7" fill="#464646" font-weight="normal" textLength="23.2" lengthAdjust="spacingAndGlyphs">Vady</text>
<text x="964.6" y="38.6" font-size="11.7" fill="#464646" font-weight="normal" textLength="35.0" lengthAdjust="spacingAndGlyphs">Upravit</text>
<text x="6.0" y="127.8" font-size="11.7" fill="#464646" font-weight="normal" textLength="30.9" lengthAdjust="spacingAndGlyphs">Vybrat</text>
<text x="59.3" y="127.8" font-size="11.7" fill="#464646" font-weight="normal" textLength="46.1" lengthAdjust="spacingAndGlyphs">Vlastnosti</text>
<text x="127.6" y="127.8" font-size="11.7" fill="#464646" font-weight="normal" textLength="42.7" lengthAdjust="spacingAndGlyphs">Schránka</text>
<text x="346.7" y="127.8" font-size="11.7" fill="#464646" font-weight="normal" textLength="70.2" lengthAdjust="spacingAndGlyphs">Ovládací prvky</text>
<text x="513.6" y="127.8" font-size="11.7" fill="#464646" font-weight="normal" textLength="34.4" lengthAdjust="spacingAndGlyphs">Upravit</text>
<text x="653.3" y="127.8" font-size="11.7" fill="#464646" font-weight="normal" textLength="32.3" lengthAdjust="spacingAndGlyphs">Pohled</text>
<text x="707.4" y="127.8" font-size="11.7" fill="#464646" font-weight="normal" textLength="33.2" lengthAdjust="spacingAndGlyphs">Měření</text>
<text x="769.0" y="127.8" font-size="11.7" fill="#464646" font-weight="normal" textLength="37.2" lengthAdjust="spacingAndGlyphs">Vytvořit</text>
<text x="10.3" y="93.6" font-size="11.7" fill="#464646" font-weight="normal" textLength="34.7" lengthAdjust="spacingAndGlyphs">Upravit</text>
<text x="123.6" y="93.6" font-size="11.7" fill="#c4c4c4" font-weight="normal" textLength="27.1" lengthAdjust="spacingAndGlyphs">Vložit</text>
<text x="360.0" y="93.5" font-size="11.7" fill="#464646" font-weight="normal" textLength="44.3" lengthAdjust="spacingAndGlyphs">Aktivovat</text>
<text x="211.5" y="62.3" font-size="11.7" fill="#464646" font-weight="normal" textLength="53.5" lengthAdjust="spacingAndGlyphs">Přizpůsobit</text>
<text x="211.5" y="84.6" font-size="11.7" fill="#464646" font-weight="normal" textLength="32.0" lengthAdjust="spacingAndGlyphs">Ořezat</text>
<text x="211.5" y="107.4" font-size="11.7" fill="#464646" font-weight="normal" textLength="21.5" lengthAdjust="spacingAndGlyphs">Spoj</text>
</g><rect x="0" y="158" width="1400" height="2" fill="#bdbdbd"/>
<rect x="0" y="160" width="117" height="18" fill="#fff"/>
<rect x="117" y="160" width="73" height="18" fill="#d0d0d0"/>
<g fill="#f2f2f2" stroke="#8a8a8a" stroke-width="1"><path d="M5.0 162.0H11.5V174.5H5.0Z"/><path d="M9.5 164.0H18.0V175.5H9.5Z"/></g><path d="M11.5 166.5V172.5" stroke="#aaa" stroke-width="0.8" stroke-dasharray="1 1"/>
<g fill="#f2f2f2" stroke="#8a8a8a" stroke-width="1"><path d="M122.0 162.0H128.5V174.5H122.0Z"/><path d="M126.5 164.0H135.0V175.5H126.5Z"/></g><path d="M128.5 166.5V172.5" stroke="#aaa" stroke-width="0.8" stroke-dasharray="1 1"/>
<text x="26.0" y="172.9" font-family="Liberation Sans" font-size="12" fill="#2a2a2a" font-weight="bold" textLength="20.9" lengthAdjust="spacingAndGlyphs">1NP</text>
<path d="M103.3 165.7L111 173M111 165.7L103.3 173" stroke="#444" stroke-width="1.2"/>
<svg x="140" y="160" width="50" height="18"><text x="2.9" y="12.9" font-family="Liberation Sans" font-size="11.7" fill="#464646" textLength="52" lengthAdjust="spacingAndGlyphs">VZT - 1NP</text></svg>
<rect x="1389" y="165.3" width="7" height="1.3" fill="#666"/><polygon points="1389,168.2 1396,168.2 1392.5,172" fill="#555"/>
<rect x="1060" y="44" width="56" height="1.5" fill="#fff"/>
<rect x="19.9" y="203.8" width="151.5" height="76.5" fill="#fff" stroke="#464646" stroke-width="1.5"/>
<rect x="33.3" y="209.3" width="12.5" height="29" rx="6" ry="3.5" fill="#d4d4d4" stroke="#8a8a8a" stroke-width="1"/><ellipse cx="39.55" cy="212.8" rx="5.6" ry="2.6" fill="#eaeaea"/>
<g fill="#d4d4d4" stroke="#8a8a8a" stroke-width="1"><ellipse cx="39.5" cy="270.5" rx="6.2" ry="3"/><rect x="35.5" y="250" width="8" height="19.5"/><ellipse cx="39.5" cy="249" rx="6" ry="2.8"/></g><ellipse cx="39.5" cy="248.8" rx="4.5" ry="1.8" fill="#ececec"/>
<text x="57.3" y="228.4" font-family="Liberation Sans" font-size="11.5" fill="#464646" font-weight="normal" textLength="83.7" lengthAdjust="spacingAndGlyphs">Konstrukční sloup</text>
<text x="57.3" y="264.7" font-family="Liberation Sans" font-size="11.5" fill="#464646" font-weight="normal" textLength="106.0" lengthAdjust="spacingAndGlyphs">Sloup: Architektonický</text>
<rect x="1384.3" y="178" width="15.7" height="525" fill="#e8e8e8"/><rect x="1398.8" y="178" width="1.2" height="525" fill="#f7f7f7"/>
<rect x="1384.3" y="194" width="14.5" height="1" fill="#d6d6d6"/><path d="M1388.5 188.8L1391.7 185.6L1394.9 188.8" fill="none" stroke="#555" stroke-width="1.2"/>
<rect x="1384.3" y="688.3" width="14.5" height="1" fill="#d6d6d6"/><path d="M1388.5 695L1391.7 698.2L1394.9 695" fill="none" stroke="#555" stroke-width="1.2"/>
<rect x="1388.2" y="433.8" width="7.1" height="15.4" rx="3.5" fill="#8a8a8a"/>
<rect x="1358.8" y="180.3" width="24.2" height="111.3" rx="3.5" fill="#f8f8f8" stroke="#a0a0a0" stroke-width="1.3"/>
<circle cx="1378.2" cy="184.8" r="2.3" fill="none" stroke="#999" stroke-width="0.9"/><path d="M1377 183.6L1379.4 186M1379.4 183.6L1377 186" stroke="#999" stroke-width="0.7"/>
<circle cx="1368.6" cy="201.3" r="6" fill="#f2f2f2" stroke="#9a9a9a" stroke-width="1.1"/><circle cx="1368.4" cy="201.1" r="2.3" fill="none" stroke="#888" stroke-width="1"/>
<text x="1370.3" y="211.6" font-family="Liberation Sans" font-size="7" font-weight="bold" fill="#4a86c5">2D</text>
<polygon points="1368.4,216.45 1372.4,216.45 1370.4,218.95" fill="#444"/>
<rect x="1361" y="221.8" width="19.5" height="1" fill="#d4d4d4"/>
<rect x="1365" y="228.5" width="7.5" height="7" fill="#9cc98a" stroke="#7ab068" stroke-width="0.6"/><circle cx="1373.5" cy="236.5" r="2.3" fill="#fff" stroke="#555" stroke-width="1"/><path d="M1375 238L1377 240" stroke="#555" stroke-width="1.2"/>
<polygon points="1368.4,246.75 1372.4,246.75 1370.4,249.25" fill="#444"/>
<path d="M1362.2 262.5L1366.5 256.2H1379.3L1375 262.5Z" fill="#f4f4f4" stroke="#8a8a8a" stroke-width="1"/>
<text x="1370.3" y="270" font-family="Liberation Sans" font-size="7" font-weight="bold" fill="#4a86c5">2D</text>
<polygon points="1368.4,274.55 1372.4,274.55 1370.4,277.05" fill="#444"/>
<circle cx="1378.2" cy="287.3" r="2.3" fill="none" stroke="#999" stroke-width="0.9"/><circle cx="1378.2" cy="287.3" r="0.9" fill="#999"/>
<rect x="0" y="703.3" width="1384.3" height="16" fill="#e8e8e8"/><rect x="1384.3" y="703.3" width="15.7" height="16" fill="#ececec"/>
<rect x="1" y="704" width="307" height="15" fill="#f3f3f3"/><rect x="308" y="704" width="14" height="15" fill="#dedede"/>
<rect x="0" y="718.6" width="1400" height="1.2" fill="#b9b9b9"/>
<rect x="838.4" y="707.5" width="15.5" height="7.3" rx="3.6" fill="#8a8a8a"/>
<path d="M316.8 707.5L313.6 711.3L316.8 715.1" fill="none" stroke="#777" stroke-width="1.2"/>
<rect x="1368.5" y="703.3" width="1" height="15.3" fill="#d7d7d7"/><path d="M1375.5 707.5L1378.7 711.3L1375.5 715.1" fill="none" stroke="#555" stroke-width="1.2"/>
<g fill="#666"><circle cx="1395.5" cy="711" r="0.8"/><circle cx="1391.5" cy="715" r="0.8"/><circle cx="1395.5" cy="715" r="0.8"/></g>
<text x="24.7" y="714.7" font-family="Liberation Sans" font-size="9.6" fill="#333" font-weight="normal" textLength="3.9" lengthAdjust="spacingAndGlyphs">1</text>
<text x="32.6" y="714.7" font-family="Liberation Sans" font-size="9.6" fill="#333" font-weight="normal" textLength="2.5" lengthAdjust="spacingAndGlyphs">:</text>
<text x="39.0" y="714.7" font-family="Liberation Sans" font-size="9.6" fill="#333" font-weight="normal" textLength="9.9" lengthAdjust="spacingAndGlyphs">50</text>
<defs><pattern id="chk" patternUnits="userSpaceOnUse" x="73" y="708" width="2" height="2"><rect width="2" height="2" fill="#e6e6e6"/><rect width="1" height="1" fill="#555"/><rect x="1" y="1" width="1" height="1" fill="#555"/></pattern></defs>
<rect x="71.8" y="706.8" width="14" height="10.2" fill="#555"/><rect x="73" y="708" width="11.6" height="7.8" fill="url(#chk)"/>
<g fill="none" stroke="#555" stroke-width="1"><path d="M94.6 709.5H103.5V717.5H94.6Z M94.6 709.5L97.5 706H106.4V714.5L103.5 717.5 M103.5 709.5L106.4 706"/></g>
<circle cx="120.5" cy="710.6" r="3.3" fill="#f0a30a"/><g stroke="#f0b030" stroke-width="0.9"><path d="M120.5 705V706.3M115.6 710.6H116.9M116.8 706.9L117.7 707.8M124.2 706.9L123.3 707.8M116.8 714.3L117.7 713.4"/></g><circle cx="126.2" cy="713.3" r="3.6" fill="#46b8c8"/><rect x="125.3" y="716.5" width="1.8" height="1.8" fill="#555"/>
<circle cx="143" cy="710" r="4.3" fill="#f0f0f0" stroke="#777" stroke-width="1"/><rect x="138" y="715.5" width="7" height="1.2" fill="#888"/><circle cx="148.3" cy="713.3" r="3.6" fill="#46b8c8"/><rect x="147.4" y="716.5" width="1.8" height="1.8" fill="#555"/>
<path d="M162 718.5V709.5H170.5" fill="none" stroke="#444" stroke-width="1.1"/><rect x="166.5" y="705" width="1.3" height="2.3" fill="#2f86d6"/><rect x="159" y="712.5" width="2.3" height="1.3" fill="#2f86d6"/><path d="M168.5 712.5L173.5 717.5M173.5 712.5L168.5 717.5" stroke="#e02a2a" stroke-width="1.5"/>
<path d="M184 718.5V709.5H192.5" fill="none" stroke="#444" stroke-width="1.1"/><rect x="188.5" y="705" width="1.3" height="2.3" fill="#2f86d6"/><rect x="181" y="712.5" width="2.3" height="1.3" fill="#2f86d6"/><circle cx="192" cy="713" r="3.6" fill="#46b8c8"/><rect x="191.1" y="716.3" width="1.8" height="1.8" fill="#555"/>
<g fill="none" stroke="#555" stroke-width="1.1"><circle cx="206.8" cy="712.5" r="2.6"/><circle cx="212.8" cy="712.5" r="2.6"/><path d="M209.4 712H210.2M204.2 712L205 708.5M215.4 712L214.6 708.5"/></g>
<circle cx="231.6" cy="709.8" r="3.9" fill="#46b8c8"/><rect x="230.3" y="713.5" width="2.6" height="2.8" fill="#555"/>
<g fill="none" stroke="#777" stroke-width="1"><path d="M248.2 716V706H255.5L258 708.5"/></g><rect x="249.5" y="707.5" width="5" height="5" fill="#ddd"/><g fill="#777"><circle cx="252.5" cy="716.5" r="0.7"/><circle cx="256.5" cy="716.5" r="0.7"/><circle cx="259" cy="713" r="0.7"/></g>
<g fill="none" stroke="#8a6060" stroke-width="0.8"><path d="M268 710L271 705.5H282V714L279 717.5"/><path d="M268 710H279V717.5H268Z M271.5 710V717.5M275 710V717.5M268 713.5H279"/></g><circle cx="279.3" cy="714.2" r="3.7" fill="#f2c04a"/><rect x="278.4" y="717" width="1.8" height="1.5" fill="#555"/>
<g fill="none" stroke="#555" stroke-width="1"><path d="M290.5 705V714.5M302.5 705V709M290.5 706.5H302.5"/></g><path d="M291 712.5H297" stroke="#888" stroke-width="0.8" stroke-dasharray="1 1"/><circle cx="301.8" cy="713" r="3.6" fill="#46b8c8"/><rect x="300.9" y="716.3" width="1.8" height="1.8" fill="#555"/>
<rect x="0" y="719.8" width="1400" height="24.2" fill="#f4f4f4"/><rect x="0" y="719.8" width="1400" height="0.8" fill="#fcfcfc"/>
<text x="1.8" y="736.9" font-family="Liberation Sans" font-size="11.6" fill="#464646" font-weight="normal" textLength="472.7" lengthAdjust="spacingAndGlyphs">Klikněte pro výběr, stiskněte klávesu TAB pro alternativy, CTRL pro přidání, SHIFT pro odebrání prvl</text>
<rect x="479" y="727" width="5.5" height="10" fill="#5aa6e2"/><rect x="486" y="725.5" width="5" height="9" fill="#e08a5a"/><rect x="482.5" y="729.5" width="5.5" height="10" fill="#5ab87a"/><path d="M488 738L493 733" stroke="#2f86d6" stroke-width="1.5"/>
<path d="M675.5 731.5L679 735L682.5 731.5" fill="none" stroke="#bbb" stroke-width="1"/>
<g fill="none" stroke="#777" stroke-width="1.1"><circle cx="696.5" cy="731" r="2.5"/><path d="M693 739.5V736.5Q693 734.5 696.5 734.5Q700 734.5 700 736.5V739.5Z"/><path d="M699.5 726H706V730.5H702L700.5 732V730.5H699.5Z"/></g>
<text x="706.5" y="737.0" font-family="Liberation Sans" font-size="11.5" fill="#999" font-weight="normal" textLength="7.0" lengthAdjust="spacingAndGlyphs">:0</text>
<rect x="735.5" y="725.5" width="13.5" height="13.5" fill="#f6f6f6" stroke="#444" stroke-width="1.1"/><rect x="735.5" y="725.5" width="13.5" height="2.8" fill="#444"/><g fill="#444"><rect x="737.5" y="730" width="1.8" height="1.5"/><rect x="737.5" y="733" width="1.8" height="1.5"/><rect x="737.5" y="736" width="1.8" height="1.5"/><rect x="740.5" y="730.3" width="7" height="1"/><rect x="740.5" y="733.3" width="7" height="1"/><rect x="740.5" y="736.3" width="7" height="1"/></g>
<g fill="none" stroke="#999" stroke-width="1"><rect x="760" y="725.5" width="10.5" height="12"/><path d="M762 728.5H768.5M762 731.5H768.5M762 734.5H768.5M757.5 736.5H761"/></g>
<text x="779.6" y="736.6" font-family="Liberation Sans" font-size="11.6" fill="#a8a8a8" font-weight="normal" textLength="64.8" lengthAdjust="spacingAndGlyphs">Hlavní model</text>
<rect x="777" y="740.3" width="188" height="1.2" fill="#d0d0d0"/><path d="M953.5 731.5L957 735L960.5 731.5" fill="none" stroke="#aaa" stroke-width="1"/>
<rect x="499" y="741.8" width="187" height="1" fill="#dcdcdc"/>
<path d="M1195.5 726H1192.5Q1190.3 726 1190.3 728Q1190.3 730 1192.5 730H1194.5M1198 730H1201Q1203.2 730 1203.2 728Q1203.2 726 1201 726H1199" fill="none" stroke="#e6a77a" stroke-width="1.3"/>
<path d="M1197.3 730.7V738.5L1199.0 737.0L1200.3 739.5L1201.5 738.9000000000001L1200.3 736.5H1202.7Z" fill="#f4f4f4" stroke="#222" stroke-width="1" stroke-linejoin="round"/>
<path d="M1213 730L1217 726H1224.5L1220.5 730Z" fill="#5aa6e2"/><path d="M1211.5 734.5L1215.5 730.5H1223L1219 734.5Z" fill="#5aa6e2"/>
<path d="M1218.5 730.7V738.5L1220.2 737.0L1221.5 739.5L1222.7 738.9000000000001L1221.5 736.5H1223.9Z" fill="#f4f4f4" stroke="#222" stroke-width="1" stroke-linejoin="round"/>
<g fill="none" stroke="#777" stroke-width="1.1"><path d="M1236 725.5H1242L1240.5 729.5L1242 732.5H1235.5L1237 729.5Z"/><path d="M1238.7 732.5L1237.5 738"/></g>
<path d="M1240 730.7V738.5L1241.7 737.0L1243 739.5L1244.2 738.9000000000001L1243 736.5H1245.4Z" fill="#f4f4f4" stroke="#222" stroke-width="1" stroke-linejoin="round"/>
<path d="M1256.2 728.5L1267 725.2V737.5L1256.2 740Z" fill="#5aa6e2"/>
<path d="M1262 731V738.8L1263.7 737.3L1265 739.8L1266.2 739.2L1265 736.8H1267.4Z" fill="#f4f4f4" stroke="#222" stroke-width="1" stroke-linejoin="round"/>
<g fill="#333"><circle cx="1284" cy="726.5" r="1.2"/><circle cx="1278.5" cy="731.8" r="1.2"/><circle cx="1284" cy="735.5" r="1.2"/></g><path d="M1284 727V735M1279 731.8H1288" stroke="#444" stroke-width="0.8" stroke-dasharray="1.2 0.8"/>
<path d="M1284 731V738.8L1285.7 737.3L1287 739.8L1288.2 739.2L1287 736.8H1289.4Z" fill="#f4f4f4" stroke="#222" stroke-width="1" stroke-linejoin="round"/>
<circle cx="1311.20" cy="732.20" r="1.15" fill="#cdcdcd"/>
<circle cx="1309.56" cy="736.16" r="1.15" fill="#cdcdcd"/>
<circle cx="1305.60" cy="737.80" r="1.15" fill="#cdcdcd"/>
<circle cx="1301.64" cy="736.16" r="1.15" fill="#cdcdcd"/>
<circle cx="1300.00" cy="732.20" r="1.15" fill="#cdcdcd"/>
<circle cx="1301.64" cy="728.24" r="1.15" fill="#cdcdcd"/>
<circle cx="1305.60" cy="726.60" r="1.15" fill="#cdcdcd"/>
<circle cx="1309.56" cy="728.24" r="1.15" fill="#cdcdcd"/>
<path d="M1320.3 726.2H1334.2L1328.8 732V739.2L1325.7 740V732Z" fill="#f6f6f6" stroke="#555" stroke-width="1.1" stroke-linejoin="round"/><path d="M1322.5 728.2H1332L1328.5 731.8H1326Z" fill="#aaa"/>
<text x="1335.5" y="737.5" font-family="Liberation Sans" font-size="11.5" fill="#333" font-weight="normal" textLength="7.7" lengthAdjust="spacingAndGlyphs">:0</text><rect x="189.7" y="113.2" width="150.5" height="115.5" fill="#fff" stroke="#e2e2e2" stroke-width="1"/>
<rect x="191" y="189" width="148" height="1" fill="#e4e4e4"/>
<rect x="191.2" y="192.8" width="147.5" height="33.8" fill="#e1e1e1"/>
<rect x="201" y="119.5" width="20.3" height="18.5" fill="#5fa8e0" stroke="#4a92cc" stroke-width="0.6"/>
<circle cx="203" cy="136.2" r="9.7" fill="#5fa8e0" stroke="#4a92cc" stroke-width="0.6"/>
<path d="M201 138.0H211.3" fill="none" stroke="#4a92cc" stroke-width="0.6"/><path d="M201 126.7V138.0" fill="none" stroke="#4a92cc" stroke-width="0.6"/>
<rect x="201" y="155.4" width="18" height="18.5" fill="#5fa8e0" stroke="#4a92cc" stroke-width="0.6"/>
<circle cx="203" cy="171.5" r="9.7" fill="#5fa8e0" stroke="#4a92cc" stroke-width="0.6"/>
<path d="M201 173.9H211.3" fill="none" stroke="#4a92cc" stroke-width="0.6"/><path d="M201 162.0V173.9" fill="none" stroke="#4a92cc" stroke-width="0.6"/>
<rect x="201" y="195" width="18" height="18.5" fill="#5fa8e0" stroke="#4a92cc" stroke-width="0.6"/>
<circle cx="203" cy="210.6" r="9.7" fill="#5fa8e0" stroke="#4a92cc" stroke-width="0.6"/>
<path d="M201 213.5H211.3" fill="none" stroke="#4a92cc" stroke-width="0.6"/><path d="M201 201.1V213.5" fill="none" stroke="#4a92cc" stroke-width="0.6"/>
<path d="M203.4 177.4L213.7 170.7L213.2 174.2Q220.5 174 222.3 180.9Q219 178.2 213 178.6L212.6 182.3Z" fill="#2d8ad8" stroke="#fff" stroke-width="1" stroke-linejoin="round" paint-order="stroke"/>
<circle cx="216.3" cy="217" r="6.8" fill="#e1e1e1"/>
<path d="M216 211.5A5.3 5.3 0 0 0 213.2 221.5" fill="none" stroke="#2d83d4" stroke-width="1.6"/><polygon points="215.5,209 219,211.6 215.5,214" fill="#2d83d4"/>
<path d="M216.6 222.5A5.3 5.3 0 0 0 219.4 212.5" fill="none" stroke="#e23a3a" stroke-width="1.6"/><polygon points="217.1,225 213.6,222.4 217.1,220" fill="#e23a3a"/>
<text x="225.2" y="137.2" font-family="Liberation Sans" font-size="11.8" fill="#464646" font-weight="normal" textLength="84.9" lengthAdjust="spacingAndGlyphs">Připojit geometrii</text>
<text x="225.2" y="173.8" font-family="Liberation Sans" font-size="11.8" fill="#464646" font-weight="normal" textLength="87.1" lengthAdjust="spacingAndGlyphs">Odpojit geometrii</text>
<text x="225.2" y="214.4" font-family="Liberation Sans" font-size="11.8" fill="#464646" font-weight="normal" textLength="107.9" lengthAdjust="spacingAndGlyphs">Přepnout pořadí spojů</text>
<path d="M240 218.5L252 222.5M261.5 233.5L266.5 231.5M254 241L256.5 248.5M265.5 247.5L269 246.5" stroke="rgba(0,0,0,0.45)" stroke-width="1.2" fill="none"/>
<path d="M239.4 220.8L263.8 229.6L256.7 234.8L267.5 243.3L265.3 246L254.6 237.4L251 244.9Z" fill="#000" stroke="#fff" stroke-width="1.6" stroke-linejoin="round" paint-order="stroke"/>
</svg>
</body></html>
